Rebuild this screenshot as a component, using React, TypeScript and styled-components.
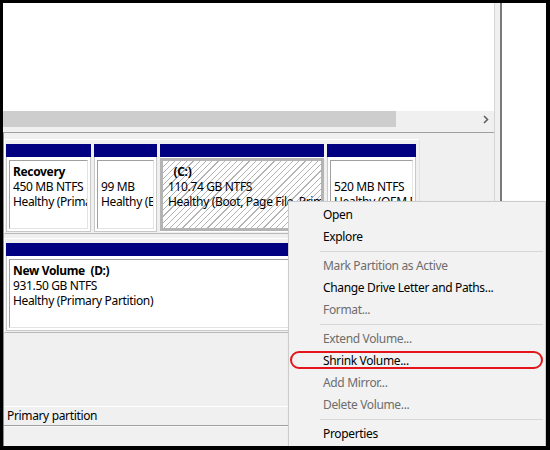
import styled, { createGlobalStyle } from 'styled-components';

const GlobalStyle = createGlobalStyle`
  html, body {
    margin: 0;
    padding: 0;
    background: #fff;
  }
  body {
    font-family: "Noto Sans", "Open Sans", sans-serif;
    font-size: 12px;
    letter-spacing: -0.35px;
    color: #000;
  }
`;

type PartitionInfo = {
  width: number;
  label?: string;
  size: string;
  status: string;
  selected?: boolean;
};

const disk0: PartitionInfo[] = [
  { width: 85, label: 'Recovery', size: '450 MB NTFS', status: 'Healthy (Primary Partition)' },
  { width: 63, size: '99 MB', status: 'Healthy (EFI System Partition)' },
  { width: 164, label: '  (C:)', size: '110.74 GB NTFS', status: 'Healthy (Boot, Page File, Primary Partition)', selected: true },
  { width: 89, size: '520 MB NTFS', status: 'Healthy (OEM Partition)' },
];

const disk1: PartitionInfo[] = [
  { width: 410, label: 'New Volume  (D:)', size: '931.50 GB NTFS', status: 'Healthy (Primary Partition)' },
];

type MenuEntry = { text: string; disabled?: boolean; circled?: boolean } | 'sep';

const menu: MenuEntry[] = [
  { text: 'Open' },
  { text: 'Explore' },
  'sep',
  { text: 'Mark Partition as Active', disabled: true },
  { text: 'Change Drive Letter and Paths...' },
  { text: 'Format...', disabled: true },
  'sep',
  { text: 'Extend Volume...', disabled: true },
  { text: 'Shrink Volume...', circled: true },
  { text: 'Add Mirror...', disabled: true },
  { text: 'Delete Volume...', disabled: true },
  'sep',
  { text: 'Properties' },
];

const Frame = styled.div`
  position: relative;
  width: 550px;
  height: 450px;
  box-sizing: border-box;
  border: 3px solid #000;
  border-right-width: 4px;
  border-bottom-width: 4px;
  display: flex;
  overflow: hidden;
  background: #fff;
`;

const MainColumn = styled.div`
  width: 491px;
  flex-shrink: 0;
  display: flex;
  flex-direction: column;
`;

const ListPane = styled.div`
  height: 108px;
  background: #fff;
`;

const HScroll = styled.div`
  height: 16px;
  display: flex;
  background: #f0f0f0;
`;

const Thumb = styled.div`
  width: 393px;
  background: #cdcdcd;
`;

const Track = styled.div`
  flex: 1;
`;

const ArrowButton = styled.div`
  width: 17px;
  display: flex;
  align-items: center;
  justify-content: center;
`;

const ScrollGap = styled.div`
  height: 5px;
  background: #f0f0f0;
  border-bottom: 1px solid #a0a0a0;
`;

const GraphPane = styled.div`
  flex: 1;
  display: flex;
  flex-direction: column;
  background: #f0f0f0;
  border-left: 1px solid #8a8a8a;
`;

const DiskRow = styled.div<{ $top: number }>`
  margin-top: ${p => p.$top}px;
  width: 416px;
  box-sizing: border-box;
  display: flex;
  gap: 3px;
  padding: 4px 3px 1px 1px;
  border: 1px solid #fff;
  border-bottom-color: #b9b9b9;
  border-right-color: #e3e3e3;
`;

const Partition = styled.div<{ $width: number }>`
  width: ${p => p.$width}px;
  flex-shrink: 0;
  display: flex;
  flex-direction: column;
`;

const Bar = styled.div`
  height: 13px;
  background: #000080;
`;

const Body = styled.div<{ $selected?: boolean }>`
  height: 75px;
  box-sizing: border-box;
  display: flex;
  background: #fff;
  padding: ${p => (p.$selected ? '1px 0 1px 0' : '3px 2px 2px 2px')};
  border: ${p => (p.$selected ? 'none' : '1px solid #c8c8c8')};
  border-top: none;
`;

const Inner = styled.div<{ $selected?: boolean }>`
  flex: 1;
  min-width: 0;
  overflow: hidden;
  box-sizing: border-box;
  line-height: 15px;
  white-space: pre;
  ${p =>
    p.$selected
      ? `
    border: 3px solid #b4b4b4;
    padding: 3px 5px;
    background: repeating-linear-gradient(135deg, #fff 0 3.6px, #b3b3b3 3.6px 4.4px);
  `
      : `
    border: 1px solid #a0a0a0;
    border-right-color: #e3e3e3;
    border-bottom-color: #e3e3e3;
    padding: 3px 3px;
  `}
`;

const Label = styled.div`
  font-weight: 700;
  height: 15px;
`;

const Line = styled.div``;

const Spacer = styled.div`
  flex: 1;
`;

const Legend = styled.div`
  border-top: 1px solid #fff;
  height: 18px;
  line-height: 18px;
  padding-left: 3px;
  border-bottom: 1px solid #a0a0a0;
`;

const LegendFoot = styled.div`
  height: 20px;
  border-top: 1px solid #fafafa;
  box-sizing: border-box;
`;

const Splitter = styled.div`
  width: 8px;
  flex-shrink: 0;
  box-sizing: border-box;
  background: #f0f0f0;
  border-left: 1px solid #d5d5d5;
  border-right: 2px solid #7a7a7a;
`;

const ActionPane = styled.div`
  flex: 1;
  background: #fff;
`;

const Menu = styled.div`
  position: absolute;
  left: 285px;
  top: 198px;
  width: 258px;
  box-sizing: border-box;
  padding: 2px 0 20px;
  background: #f2f2f2;
  border: 1px solid #cccccc;
  box-shadow: 2px 2px 3px rgba(0, 0, 0, 0.25);
`;

const Item = styled.div<{ $disabled?: boolean; $circled?: boolean }>`
  position: relative;
  height: 22px;
  line-height: 22px;
  padding-left: 34px;
  color: ${p => (p.$disabled ? '#6d6d6d' : '#000')};

  ${p =>
    p.$circled &&
    `
    &::after {
      content: '';
      position: absolute;
      left: 1px;
      top: 1px;
      width: 253px;
      height: 18px;
      box-sizing: border-box;
      border: 2px solid #e3161b;
      border-radius: 10px;
    }
  `}
`;

const Separator = styled.div`
  height: 1px;
  margin: 3px 2px 3px 31px;
  background: #d7d7d7;
`;

const Disk = ({ parts, top }: { parts: PartitionInfo[]; top: number }) => (
  <DiskRow $top={top}>
    {parts.map((p, i) => (
      <Partition key={i} $width={p.width}>
        <Bar />
        <Body $selected={p.selected}>
          <Inner $selected={p.selected}>
            <Label>{p.label ?? ''}</Label>
            <Line>{p.size}</Line>
            <Line>{p.status}</Line>
          </Inner>
        </Body>
      </Partition>
    ))}
  </DiskRow>
);

export default function App() {
  return (
    <>
      <GlobalStyle />
      <Frame>
        <MainColumn>
          <ListPane />
          <HScroll>
            <Thumb />
            <Track />
            <ArrowButton>
              <svg width="8" height="9" viewBox="0 0 8 9">
                <path d="M2 1 L5.5 4.5 L2 8" fill="none" stroke="#606060" strokeWidth="1.6" />
              </svg>
            </ArrowButton>
          </HScroll>
          <ScrollGap />
          <GraphPane>
            <Disk parts={disk0} top={6} />
            <Disk parts={disk1} top={4} />
            <Spacer />
            <Legend>Primary partition</Legend>
            <LegendFoot />
          </GraphPane>
        </MainColumn>
        <Splitter />
        <ActionPane />
        <Menu>
          {menu.map((m, i) =>
            m === 'sep' ? (
              <Separator key={i} />
            ) : (
              <Item key={i} $disabled={m.disabled} $circled={m.circled}>
                {m.text}
              </Item>
            )
          )}
        </Menu>
      </Frame>
    </>
  );
}
